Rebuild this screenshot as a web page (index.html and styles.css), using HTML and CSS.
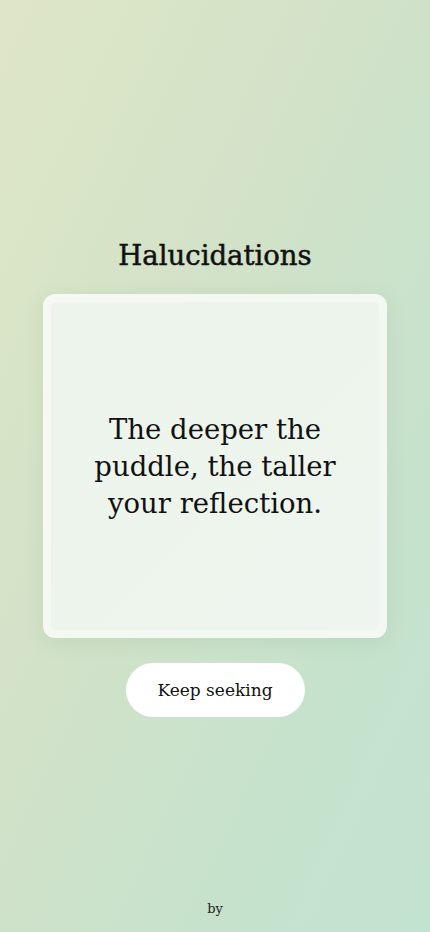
FILE: index.html
```html
<!DOCTYPE html>
<html lang="en">
<head>
<meta charset="utf-8">
<meta name="viewport" content="width=device-width, initial-scale=1">
<title>Halucidations</title>
<link rel="stylesheet" href="styles.css">
</head>
<body>
<main class="page">
  <h1 class="title">Halucidations</h1>
  <section class="card">
    <div class="card-inner">
      <p class="quote">The deeper the puddle, the taller your reflection.</p>
    </div>
  </section>
  <button class="seek" type="button">Keep seeking</button>
  <footer class="footer">by<a class="by-link" href="#"> </a></footer>
</main>
</body>
</html>
```
FILE: styles.css
```css
* { box-sizing: border-box; }
html, body { margin: 0; padding: 0; }
body {
  width: 430px;
  height: 932px;
  background: linear-gradient(115deg, #dfe6c7 0%, #d2e2c8 40%, #c6e2cc 75%, #c2e3d1 100%);
  font-family: "DejaVu Serif", "Liberation Serif", serif;
  color: #111;
  overflow: hidden;
}
.page {
  height: 932px;
  display: flex;
  flex-direction: column;
  align-items: center;
  padding-top: 237px;
}
.title {
  margin: 0;
  font-size: 27.5px;
  line-height: 36px;
  font-weight: 400;
  letter-spacing: 0;
  -webkit-text-stroke: 0.5px #111;
}
.card {
  margin-top: 21px;
  width: 344px;
  height: 344px;
  border-radius: 12px;
  background: rgba(250, 252, 250, 0.85);
  padding: 8px;
  box-shadow: 0 4px 20px rgba(90, 130, 90, 0.12);
}
.card-inner {
  width: 100%;
  height: 100%;
  border-radius: 6px;
  background: linear-gradient(135deg, #edf4eb 0%, #eef5ee 100%);
  display: flex;
  align-items: center;
  justify-content: center;
  padding: 0 30px;
}
.quote {
  margin: 0;
  text-align: center;
  font-size: 27.5px;
  line-height: 37px;
}
.seek {
  margin-top: 25px;
  width: 179px;
  height: 54px;
  border: 0;
  border-radius: 27px;
  background: #fff;
  font-family: inherit;
  font-size: 17px;
  color: #111;
}
.footer {
  margin-top: auto;
  margin-bottom: 16px;
  font-size: 13px;
  color: #222;
}
.by-link {
  color: #555;
}
```
